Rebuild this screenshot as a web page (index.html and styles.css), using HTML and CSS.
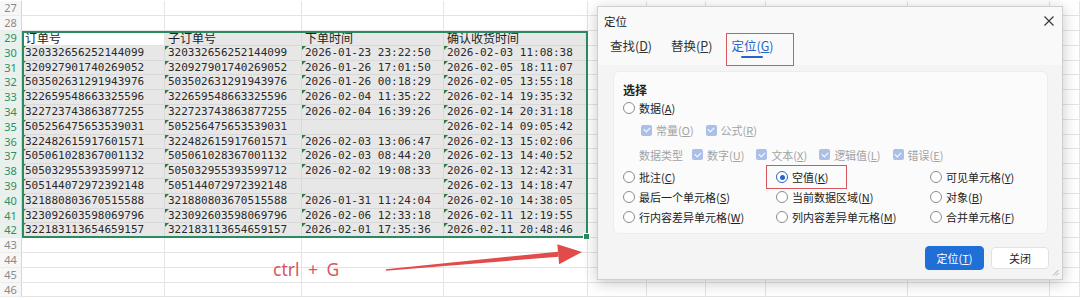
FILE: index.html
```html
<!DOCTYPE html>
<html lang="zh-CN">
<head>
    <meta charset="UTF-8">
    <title>定位 - 空值</title>
    <link rel="stylesheet" href="styles.css">
</head>
<body>
    <div class="sheet" id="sheet"></div>

    <div class="selection"><span class="fill-handle"></span></div>

    <div class="hint">ctrl + G</div>
    <svg class="arrow" width="1080" height="300" viewBox="0 0 1080 300">
        <polygon points="386,270.8 385.9,269.2 557.9,251.7 558.3,256.7" fill="#e24b4b"/>
        <polygon points="582,252 557.3,244.2 559.1,264.2" fill="#e24b4b"/>
    </svg>

    <div class="dialog">
        <div class="dialog-title">
            <span>定位</span>
            <span class="close">
                <svg width="10" height="10" viewBox="0 0 10 10"><path d="M0.5 0.5 L9.5 9.5 M9.5 0.5 L0.5 9.5" stroke="#333" stroke-width="1.1"/></svg>
            </span>
        </div>

        <div class="tabs">
            <span class="tab">查找(<u>D</u>)</span>
            <span class="tab">替换(<u>P</u>)</span>
            <span class="tab active">定位(<u>G</u>)<i class="mark tab-mark"></i></span>
        </div>

        <div class="panel">
            <div class="group-title">选择</div>
            <div class="opt"><span class="radio"></span><span>数据(<u>A</u>)</span></div>

            <div class="checks const-row">
                <span class="check-item"><span class="checkbox"></span><span>常量(<u>O</u>)</span></span>
                <span class="check-item"><span class="checkbox"></span><span>公式(<u>R</u>)</span></span>
            </div>
            <div class="checks type-row">
                <span class="type-label">数据类型</span>
                <span class="check-item"><span class="checkbox"></span><span>数字(<u>U</u>)</span></span>
                <span class="check-item"><span class="checkbox"></span><span>文本(<u>X</u>)</span></span>
                <span class="check-item"><span class="checkbox"></span><span>逻辑值(<u>L</u>)</span></span>
                <span class="check-item"><span class="checkbox"></span><span>错误(<u>E</u>)</span></span>
            </div>

            <div class="opt-grid">
                <div class="opt"><span class="radio"></span><span>批注(<u>C</u>)</span></div>
                <div class="opt"><span class="radio on"></span><span>空值(<u>K</u>)</span><i class="mark opt-mark"></i></div>
                <div class="opt"><span class="radio"></span><span>可见单元格(<u>Y</u>)</span></div>
                <div class="opt"><span class="radio"></span><span>最后一个单元格(<u>S</u>)</span></div>
                <div class="opt"><span class="radio"></span><span>当前数据区域(<u>N</u>)</span></div>
                <div class="opt"><span class="radio"></span><span>对象(<u>B</u>)</span></div>
                <div class="opt"><span class="radio"></span><span>行内容差异单元格(<u>W</u>)</span></div>
                <div class="opt"><span class="radio"></span><span>列内容差异单元格(<u>M</u>)</span></div>
                <div class="opt"><span class="radio"></span><span>合并单元格(<u>F</u>)</span></div>
            </div>
        </div>

        <div class="footer">
            <button class="btn primary">定位(<u>T</u>)</button>
            <button class="btn">关闭</button>
        </div>
        <svg class="grip" width="7" height="7" viewBox="0 0 7 7"><path d="M6.5 1 L1 6.5 M6.5 4 L4 6.5" stroke="#aaa" stroke-width="1"/></svg>
    </div>

    <script>
        // rows 29..42 of the sheet, columns A..D
        const header = ['订单号', '子订单号', '下单时间', '确认收货时间'];
        const orders = [
            ['320332656252144099', '2026-01-23 23:22:50', '2026-02-03 11:08:38'],
            ['320927901740269052', '2026-01-26 17:01:50', '2026-02-05 18:11:07'],
            ['503502631291943976', '2026-01-26 00:18:29', '2026-02-05 13:55:18'],
            ['322659548663325596', '2026-02-04 11:35:22', '2026-02-14 19:35:32'],
            ['322723743863877255', '2026-02-04 16:39:26', '2026-02-14 20:31:18'],
            ['505256475653539031', '', '2026-02-14 09:05:42'],
            ['322482615917601571', '2026-02-03 13:06:47', '2026-02-13 15:02:06'],
            ['505061028367001132', '2026-02-03 08:44:20', '2026-02-13 14:40:52'],
            ['505032955393599712', '2026-02-02 19:08:33', '2026-02-13 12:42:31'],
            ['505144072972392148', '', '2026-02-13 14:18:47'],
            ['321880803670515588', '2026-01-31 11:24:04', '2026-02-10 14:38:05'],
            ['323092603598069796', '2026-02-06 12:33:18', '2026-02-11 12:19:55'],
            ['322183113654659157', '2026-02-01 17:35:36', '2026-02-11 20:48:46']
        ];

        const sheet = document.getElementById('sheet');
        const colCount = 10; // A..J

        for (let r = 27; r <= 46; r++) {
            const inSel = r >= 29 && r <= 42;

            const head = document.createElement('div');
            head.className = 'row-head' + (inSel ? ' sel' : '');
            head.textContent = r;
            sheet.appendChild(head);

            let values = [];
            if (r === 29) values = header;
            if (r >= 30 && r <= 42) {
                const o = orders[r - 30];
                values = [o[0], o[0], o[1], o[2]];
            }

            for (let c = 0; c < colCount; c++) {
                const cell = document.createElement('div');
                cell.className = 'cell';
                if (inSel && c < 4 && !(r === 29 && c === 0)) cell.classList.add('sel');
                const text = values[c] || '';
                if (text) {
                    cell.textContent = text;
                    if (r === 29) cell.classList.add('title');
                    else cell.classList.add('num-text');
                }
                sheet.appendChild(cell);
            }
        }
    </script>
</body>
</html>
```

FILE: styles.css
```css
body {
    margin: 0;
    width: 1080px;
    height: 300px;
    overflow: hidden;
    position: relative;
    background-color: #fff;
    font-family: "Noto Sans CJK SC", sans-serif;
    color: #222;
}

/* spreadsheet */
.sheet {
    display: grid;
    grid-template-columns: 22px 143px 137px 142px 144px 59px 59px 60px 142px 142px 1fr;
    grid-auto-rows: 14.8px;
    margin-top: 1.4px;
}
.row-head {
    font-family: "Noto Sans", sans-serif;
    font-size: 11px;
    line-height: 14.8px;
    text-align: center;
    color: #8a8a8a;
    background-color: #f7f7f7;
    border-right: 1px solid #d6d6d6;
    border-bottom: 1px solid #ececec;
    box-sizing: border-box;
}
.row-head.sel {
    color: #2f8f5f;
    background-color: #e9f1ec;
}
.cell {
    position: relative;
    border-right: 1px solid #e4e4e4;
    border-bottom: 1px solid #e4e4e4;
    box-sizing: border-box;
    padding-left: 3px;
    white-space: nowrap;
    font-size: 12px;
    line-height: 14px;
}
.cell.sel {
    background-color: #e7e7e7;
    border-color: #d9d9d9;
}
.cell.num-text {
    font-family: "DejaVu Sans Mono", monospace;
    font-size: 11px;
    line-height: 13.8px;
    color: #2a2a2a;
}
.cell.num-text::before {
    content: "";
    position: absolute;
    left: 0;
    top: 0;
    border-top: 4px solid #2c7a3c;
    border-right: 4px solid transparent;
}
.cell.title {
    color: #1d1d1d;
}

.selection {
    position: absolute;
    left: 22px;
    top: 31px;
    width: 566px;
    height: 207px;
    border: 2px solid #2b8a60;
    box-sizing: border-box;
}
.fill-handle {
    position: absolute;
    right: -4px;
    bottom: -4px;
    width: 5px;
    height: 5px;
    background-color: #2b8a60;
    border: 1px solid #fff;
}

/* annotation */
.hint {
    position: absolute;
    left: 273px;
    top: 258px;
    font-family: "Noto Sans", sans-serif;
    font-size: 17.5px;
    line-height: 22px;
    word-spacing: 4px;
    color: #d6585e;
}
.arrow {
    position: absolute;
    left: 0;
    top: 0;
}
.mark {
    position: absolute;
    border: 1.5px solid #d6585e;
    box-sizing: border-box;
}

/* dialog */
.dialog {
    position: absolute;
    left: 597px;
    top: 6px;
    width: 466px;
    height: 274px;
    background-color: #f4f4f4;
    border: 1px solid #cfcfcf;
    box-sizing: border-box;
    box-shadow: 0 3px 14px rgba(0,0,0,0.22);
    font-size: 11px;
}
.dialog u {
    text-decoration: underline;
    text-underline-offset: 1px;
}
.dialog-title {
    height: 27px;
    display: flex;
    align-items: center;
    justify-content: space-between;
    padding: 0 8px 0 6px;
    font-size: 11.5px;
    background-color: #f9f9f9;
}
.close {
    display: flex;
    width: 10px;
    height: 10px;
}
.tabs {
    display: flex;
    gap: 19px;
    padding: 2px 0 0 12px;
    height: 31px;
    box-sizing: border-box;
    font-size: 12.5px;
    background-color: #f9f9f9;
}
.tab {
    position: relative;
    height: 20px;
    line-height: 20px;
    color: #333;
}
.tab.active {
    color: #2565c8;
}
.tab.active::after {
    content: "";
    position: absolute;
    left: 10px;
    right: 11px;
    bottom: -2px;
    height: 2px;
    border-radius: 1px;
    background-color: #2565c8;
}
.tab-mark {
    left: -5px;
    top: -3px;
    width: 68px;
    height: 33px;
}

.panel {
    margin: 6px 14px 0 15px;
    height: 163px;
    box-sizing: border-box;
    padding: 10px 9px 8px;
    background-color: #fbfbfb;
    border: 1px solid #ededed;
    border-radius: 6px;
}
.group-title {
    font-size: 12px;
    font-weight: bold;
    line-height: 16px;
}
.opt {
    position: relative;
    display: flex;
    align-items: center;
    gap: 4px;
    height: 20px;
    white-space: nowrap;
}
.radio {
    width: 12px;
    height: 12px;
    border: 1px solid #8c8c8c;
    border-radius: 50%;
    background-color: #fff;
    box-sizing: border-box;
    position: relative;
    flex-shrink: 0;
}
.radio.on {
    border-color: #2565c8;
}
.radio.on::after {
    content: "";
    position: absolute;
    left: 2.5px;
    top: 2.5px;
    width: 5px;
    height: 5px;
    border-radius: 50%;
    background-color: #2565c8;
}
.opt-mark {
    left: -10px;
    top: -2px;
    width: 81px;
    height: 24px;
}
.checks {
    display: flex;
    align-items: center;
    gap: 12px;
    color: #a3a3a3;
}
.const-row {
    height: 24px;
    padding-left: 18px;
}
.type-row {
    height: 25px;
    padding-left: 16px;
}
.type-label {
    margin-right: -3px;
}
.check-item {
    display: flex;
    align-items: center;
    gap: 4px;
}
.checkbox {
    width: 11px;
    height: 11px;
    border-radius: 2px;
    background-color: #aac0e6;
    position: relative;
}
.checkbox::after {
    content: "";
    position: absolute;
    left: 3.5px;
    top: 1.5px;
    width: 3px;
    height: 5px;
    border: solid #fff;
    border-width: 0 1.3px 1.3px 0;
    transform: rotate(45deg);
}
.opt-grid {
    display: grid;
    grid-template-columns: 153px 154px 1fr;
}

.footer {
    display: flex;
    justify-content: flex-end;
    align-items: center;
    gap: 7px;
    padding: 12px 13px 0 0;
}
.btn {
    width: 58px;
    height: 22px;
    border: 1px solid #e2e2e2;
    border-radius: 4px;
    background-color: #fff;
    font-family: "Noto Sans CJK SC", sans-serif;
    font-size: 11px;
    color: #222;
    padding: 0;
}
.btn.primary {
    width: 59px;
    height: 24px;
    border-color: #1f6fd6;
    background-color: #1f6fd6;
    color: #fff;
}
.grip {
    position: absolute;
    right: 3px;
    bottom: 3px;
}
```
